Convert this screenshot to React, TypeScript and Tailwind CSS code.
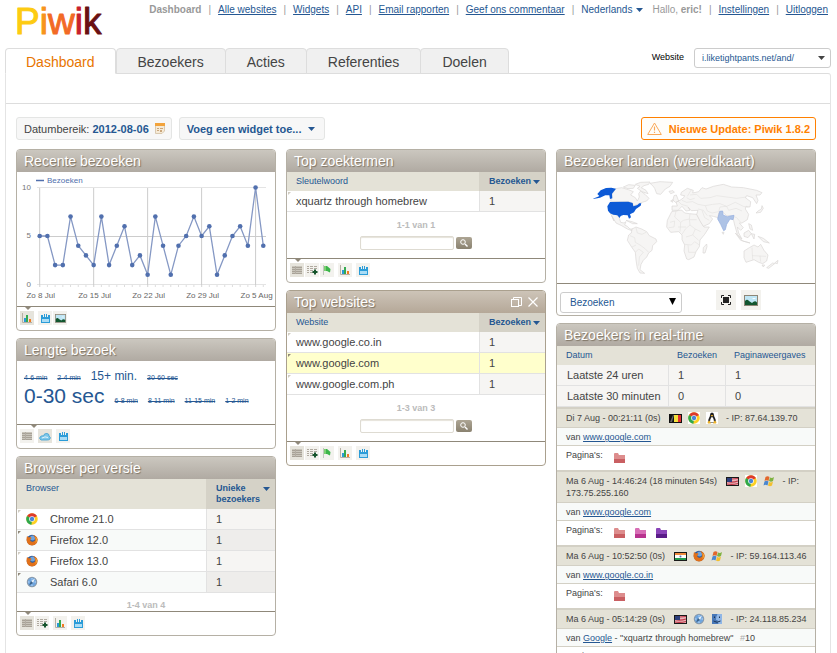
import React, { ReactNode } from "react";

/* ---------- small icons ---------- */

const Chrome = () => (
  <svg viewBox="0 0 24 24" className="inline-block h-3 w-3 shrink-0" aria-hidden="true">
    <rect width="24" height="24" fill="#fff" />
    <circle cx="12" cy="12" r="11.500" fill="#fdd023" />
    <path d="M12 12 L2 6.200 A11.500 11.500 0 0 1 22 6.200 Z" fill="#dd3a2c" />
    <path d="M12 12 L2 6.200 A11.500 11.500 0 0 0 11 23.500 Z" fill="#2fa84c" />
    <circle cx="12" cy="12" r="5.600" fill="#fff" />
    <circle cx="12" cy="12" r="4.400" fill="#4a86d8" />
  </svg>
);

const Firefox = () => (
  <svg viewBox="0 0 24 24" className="inline-block h-3 w-3 shrink-0" aria-hidden="true">
    <circle cx="12" cy="12" r="10.500" fill="#2b5a9c" />
    <circle cx="13" cy="8" r="5" fill="#6fa3dc" />
    <path d="M2 4 L6 7 Q9 5 11 8 L8 12 Q10 17 15 15 Q19 14 18 8 Q17 4 14 2 Q22 3 23.500 11 Q23 22 12 23 Q2 22 1 12 Q1 8 2 4Z" fill="#e0701a" />
    <path d="M19 5 Q24 12 19 18 Q21 12 19 5Z" fill="#fbc441" />
  </svg>
);

const Safari = () => (
  <svg viewBox="0 0 24 24" className="inline-block h-3 w-3 shrink-0" aria-hidden="true">
    <circle cx="12" cy="12" r="10.500" fill="#8c9aa8" />
    <circle cx="12" cy="12" r="8.500" fill="#6fa6df" />
    <path d="M18 5 L14 14 L10 10Z" fill="#e8f0f8" />
    <path d="M6 19 L14 14 L10 10Z" fill="#3d6288" />
    <path d="M12 4v3M12 17v3M4 12h3M17 12h3" stroke="#dbe9f7" strokeWidth="1.500" />
  </svg>
);

const Windows = () => (
  <svg viewBox="0 0 24 24" className="inline-block h-3 w-3 shrink-0" aria-hidden="true">
    <path d="M5 4 Q9 1 13 4 L11 12 Q7 9 3 12Z" fill="#e2672c" />
    <path d="M14 5 Q18 7 22 4 L20 12 Q16 15 12 12Z" fill="#7fb241" />
    <path d="M3 13 Q7 10 11 13 L9 21 Q5 18 1 21Z" fill="#4a87cf" />
    <path d="M12 14 Q16 16 20 13 L18 21 Q14 24 10 21Z" fill="#f3c02f" />
  </svg>
);

const Mac = () => (
  <svg viewBox="0 0 24 24" className="inline-block h-3 w-3 shrink-0" aria-hidden="true">
    <rect x="2" y="2" width="20" height="20" fill="#8fb6e6" />
    <path d="M2 2 H13 Q9 9 10 14 H13 Q13 19 15 22 H2Z" fill="#4878b8" />
    <path d="M7 7v3M17 7v3M5 16 Q12 21 19 16" stroke="#1d3557" strokeWidth="2" fill="none" />
  </svg>
);

const Tux = () => (
  <svg viewBox="0 0 24 24" className="inline-block h-3 w-3 shrink-0" aria-hidden="true">
    <rect width="24" height="24" fill="#fff" />
    <path d="M12 1 Q16 1 16 6 Q16 9 18 12 Q21 17 19 21 H5 Q3 17 6 12 Q8 9 8 6 Q8 1 12 1Z" fill="#222" />
    <path d="M12 9 Q16 13 16 20 H8 Q8 13 12 9Z" fill="#fff" />
    <path d="M9 6 H15 L12 9Z" fill="#f0b429" />
    <path d="M3 20 L7 17 L10 23 H4Z M21 20 L17 17 L14 23 H20Z" fill="#f0b429" />
  </svg>
);

const FlagBE = () => (
  <svg viewBox="0 0 13 9" className="inline-block h-[9px] w-[13px] shrink-0" aria-hidden="true">
    <rect width="13" height="9" fill="#111" />
    <rect x="5" y="1" width="4" height="7" fill="#f4e13c" />
    <rect x="9" y="1" width="3" height="7" fill="#e03131" />
    <path d="M1 8 L4 1 H5 L3 8Z" fill="#666" />
  </svg>
);

const FlagUS = () => (
  <svg viewBox="0 0 13 9" className="inline-block h-[9px] w-[13px] shrink-0" aria-hidden="true">
    <rect width="13" height="9" fill="#1a1a1a" />
    <rect x="1" y="1" width="11" height="7" fill="#e9b4b8" />
    <path d="M1 4.500 Q6 6 12 4 M1 7 Q6 8 12 6.500 M6 2 L12 1.500" stroke="#c0394a" strokeWidth="1.200" fill="none" />
    <rect x="1" y="1" width="5" height="4" fill="#2d3f7c" />
  </svg>
);

const FlagIN = () => (
  <svg viewBox="0 0 13 9" className="inline-block h-[9px] w-[13px] shrink-0" aria-hidden="true">
    <rect width="13" height="9" fill="#1a1a1a" />
    <rect x="1" y="1" width="11" height="3" fill="#f08a3c" />
    <rect x="1" y="3" width="11" height="3" fill="#fff" />
    <rect x="1" y="6" width="11" height="2" fill="#239a4b" />
    <circle cx="6.500" cy="4.500" r="1" fill="#5568b0" />
  </svg>
);

const Folder = ({ color, dark }: { color: string; dark: string }) => (
  <svg viewBox="0 0 11 10" className="h-[10px] w-[11px]" aria-hidden="true">
    <path d="M0 1 Q0 0 1 0 H4 L5 2 H11 V10 H0Z" fill={color} />
    <path d="M0 6 H11 V10 H0Z" fill={dark} />
  </svg>
);

const TableIcon = () => (
  <svg viewBox="0 0 10 8" className="h-2 w-[10px]" aria-hidden="true">
    <rect width="10" height="8" fill="#c9c5bb" />
    <path d="M0 1.500H10M0 3.500H10M0 5.500H10M0 7.500H10" stroke="#a8a297" />
    <path d="M3.500 0V8" stroke="#b3ada3" />
  </svg>
);

const TablePlusIcon = () => (
  <svg viewBox="0 0 12 10" className="h-[10px] w-3" aria-hidden="true">
    <path d="M1 1h2v1H1zM4 1h3v1H4zM8 1h3v1H8zM1 3h2v1H1zM4 3h3v1H4zM8 3h3v1H8zM1 5h2v1H1zM4 5h3v1H4zM1 7h2v1H1zM4 7h3v1H4z" fill="#b0aaa0" />
    <path d="M9 4.500V9.500M6.500 7H11.500" stroke="#15542c" strokeWidth="2" />
  </svg>
);

const ChartIcon = () => (
  <svg viewBox="0 0 10 10" className="h-[10px] w-[10px]" aria-hidden="true">
    <path d="M.5 0V9.500H10" stroke="#b5b0a5" fill="none" />
    <rect x="2" y="5" width="2" height="4" fill="#2c9ad6" />
    <rect x="4" y="2" width="2" height="7" fill="#35aa50" />
    <rect x="7" y="6" width="2" height="3" fill="#f27b21" />
  </svg>
);

const SaveIcon = () => (
  <svg viewBox="0 0 9 9" className="h-[9px] w-[9px]" aria-hidden="true">
    <path d="M0 1H2V3H3V0H4V3H5V0H6V3H7V1H9V9H0Z" fill="#2b9cd8" />
    <rect x="1" y="5" width="7" height="3" fill="#a9dcf5" />
  </svg>
);

const PictureIcon = ({ big }: { big?: boolean }) => (
  <svg viewBox="0 0 14 11" className={big ? "h-[11px] w-[14px]" : "h-[9px] w-[11px]"} aria-hidden="true">
    <rect x=".5" y=".5" width="13" height="10" fill="#bfe6f5" stroke="#8d8677" />
    <path d="M1 6 Q3 3.500 5 6 L8 8 Q11 5 13 7.500 V10 H1Z" fill="#12562f" />
    <path d="M8 4 q2 -2 4 0z" fill="#fff" />
  </svg>
);

const FlagIcon = () => (
  <svg viewBox="0 0 10 10" className="h-[10px] w-[10px]" aria-hidden="true">
    <path d="M1.500 0V10" stroke="#c2c6bf" />
    <path d="M2 1 L5 1 L8.500 4 L8 7.500 L5 6 L2 6Z" fill="#3cb54a" />
    <path d="M2 1 L4 1 L4 6 L2 6Z" fill="#7ccf72" />
  </svg>
);

const CloudIcon = () => (
  <svg viewBox="0 0 12 9" className="h-[9px] w-3" aria-hidden="true">
    <path d="M2 8 Q0 7 1 5 Q3 3 4.500 4 Q5 1 8 1.500 Q10.500 2 10 4 Q12 5 11 7 Q10 8 8 8Z" fill="#7cc7ea" stroke="#3d9fd0" strokeWidth=".8" />
    <path d="M3 6 Q6 4 9 5.500" stroke="#e2f4fc" fill="none" />
  </svg>
);

const Caret = () => (
  <svg viewBox="0 0 7 4" className="inline-block h-1 w-[7px] shrink-0" aria-hidden="true">
    <path d="M0 0H7L3.500 4Z" fill="currentColor" />
  </svg>
);

/* ---------- widget building blocks ---------- */

function Widget({ title, hover, children }: { title: string; hover?: boolean; children: ReactNode }) {
  return (
    <section className={`overflow-hidden rounded-[4px] border bg-white ${hover ? "border-[#aaa08e]" : "border-[#b5b0a5]"}`}>
      <header
        className={`flex h-[22px] items-center justify-between bg-linear-to-b px-[7px] ${
          hover ? "from-[#cdc4b8] to-[#b5a898]" : "from-[#cbc7bf] to-[#b0aaa2]"
        }`}
      >
        <h2 className="text-[14px] leading-5 text-white [text-shadow:1px_1px_1px_#7e7363]">{title}</h2>
        {hover && (
          <span className="flex items-center gap-[6px] text-white">
            <button type="button" aria-label="Maximaliseren">
              <svg viewBox="0 0 11 10" className="h-[10px] w-[11px]" fill="none" stroke="currentColor">
                <path d="M2.500 2V.5H10.500V8.500H8" />
                <rect x=".5" y="2.500" width="7" height="7" />
              </svg>
            </button>
            <button type="button" aria-label="Sluiten">
              <svg viewBox="0 0 10 10" className="h-[10px] w-[10px]" fill="none" stroke="currentColor">
                <path d="M.5 .5L9.500 9.500M9.500 .5L.5 9.500" strokeWidth="1.200" />
              </svg>
            </button>
          </span>
        )}
      </header>
      {children}
    </section>
  );
}

type Tool = { label: string; icon: ReactNode; active?: boolean };

const T = {
  table: { label: "Tabel", icon: <TableIcon /> },
  tablePlus: { label: "Uitgebreide tabel", icon: <TablePlusIcon /> },
  goals: { label: "Doelen", icon: <FlagIcon /> },
  chart: { label: "Grafiek", icon: <ChartIcon /> },
  save: { label: "Exporteren", icon: <SaveIcon /> },
  picture: { label: "Afbeelding", icon: <PictureIcon /> },
  cloud: { label: "Tag cloud", icon: <CloudIcon /> },
};

function Footer({ groups, marker = "left-2" }: { groups: Tool[][]; marker?: string }) {
  return (
    <footer className="relative flex h-6 gap-1 border-t border-[#8f887a] px-[3px] pt-1">
      <svg viewBox="0 0 6 3" className={`absolute top-0 h-[3px] w-[6px] ${marker}`} aria-hidden="true">
        <path d="M0 0H6L3 3Z" fill="#8f887a" />
      </svg>
      {groups.map((g, i) => (
        <div key={i} className="flex gap-px">
          {g.map((t) => (
            <button
              key={t.label}
              type="button"
              aria-label={t.label}
              className={`flex h-[14px] w-[14px] items-center justify-center ${t.active ? "bg-[#e6e4dc]" : "bg-[#f3f2ee]"}`}
            >
              {t.icon}
            </button>
          ))}
        </div>
      ))}
    </footer>
  );
}

type Row = { label: string; value: string; icon?: ReactNode; hover?: boolean };

function DataTable({ name, metric, rows, wide }: { name: string; metric: string; rows: Row[]; wide?: boolean }) {
  return (
    <table className="w-full table-fixed border-separate border-spacing-0 text-left">
      <thead>
        <tr className={`text-[9px] leading-[11px] text-[#255792] ${wide ? "h-[30px] align-top" : "h-[19px]"}`}>
          <th className={`bg-[#e4e2d7] pl-[9px] font-normal ${wide ? "pt-1" : ""}`}>{name}</th>
          <th className={`bg-[#d5d2c7] pr-[5px] pl-[10px] font-bold ${wide ? "w-[69px] pt-1" : "w-[66px]"}`}>
            <span className="flex items-start justify-between">
              {metric}
              <span className="flex h-[11px] items-center">
                <Caret />
              </span>
            </span>
          </th>
        </tr>
      </thead>
      <tbody>
        {rows.map((r, i) => {
          const even = i % 2 === 1;
          return (
            <tr key={r.label} className="h-[21px] text-[11px] leading-4 text-[#444]">
              <td className={`relative border-b border-[#e2e2e2] pl-[9px] ${r.hover ? "bg-[#ffffcc]" : even ? "bg-[#f8faf9]" : "bg-white"}`}>
                <svg viewBox="0 0 3 3" className="absolute top-px left-px h-[3px] w-[3px]" aria-hidden="true">
                  <path d="M0 0H3L0 3Z" fill={even ? "#8f887a" : "#d0ccc2"} />
                </svg>
                <span className={r.icon ? "flex items-center gap-3" : ""}>
                  {r.icon}
                  {r.label}
                </span>
              </td>
              <td
                className={`border-b border-l border-[#e2e2e2] pl-[9px] ${
                  r.hover ? "bg-[#ffffcc]" : even ? "bg-[#eeedeb]" : "bg-[#f6f5f3]"
                }`}
              >
                {r.value}
              </td>
            </tr>
          );
        })}
      </tbody>
    </table>
  );
}

function Search({ id }: { id: string }) {
  return (
    <form className="flex items-center justify-center gap-[2px] pb-2" onSubmit={(e) => e.preventDefault()}>
      <label htmlFor={id} className="sr-only">
        Zoeken
      </label>
      <input id={id} type="text" className="h-[14px] w-[94px] rounded-[2px] border border-[#dedbd2] bg-white px-1 text-[9px] shadow-[inset_0_1px_1px_#e6e3da]" />
      <button type="submit" aria-label="Zoeken" className="flex h-3 w-4 items-center justify-center rounded-[2px] bg-linear-to-b from-[#ada594] to-[#8a8270]">
        <svg viewBox="0 0 8 8" className="h-2 w-2" fill="none" stroke="#fff">
          <circle cx="3" cy="3" r="2.300" />
          <path d="M5 5L7.500 7.500" strokeWidth="1.400" />
        </svg>
      </button>
    </form>
  );
}

const Pager = ({ text, className }: { text: string; className: string }) => (
  <p className={`text-center text-[9px] leading-3 font-bold text-[#bbb] ${className}`}>{text}</p>
);

/* ---------- line chart ---------- */

const visits = [5, 5, 2, 2, 7, 4, 3, 2, 7, 2, 4, 6, 2, 3, 1, 7, 4, 1, 4, 5, 7, 5, 6, 1, 3, 5, 6, 4, 10, 4];
const px = (i: number) => 22.700 + i * 7.710;
const py = (v: number) => 112.500 - v * 9.700;
const weeks: [number, string][] = [
  [0, "Zo 8 Jul"],
  [7, "Zo 15 Jul"],
  [14, "Zo 22 Jul"],
  [21, "Zo 29 Jul"],
  [28, "Zo 5 Aug"],
];

function VisitsChart() {
  return (
    <svg viewBox="0 0 258 134" className="block w-full font-['Liberation_Sans',sans-serif]" role="img" aria-label="Bezoeken">
      <path d="M20 15.500H249M20 112.500H249" stroke="#e4e4e4" />
      <path d="M20 64.500H249" stroke="#ccc" />
      {weeks.map(([i, label]) => (
        <g key={label}>
          <path d={`M${px(i)} 16V115`} stroke="#ccc" />
          <text x={px(i) + 1} y="126" fontSize="8" fill="#666" textAnchor="middle">
            {label}
          </text>
        </g>
      ))}
      {visits.map((_, i) => (
        <path key={i} d={`M${px(i)} 113v2`} stroke="#ddd" />
      ))}
      <g fontSize="8" fill="#777" textAnchor="end">
        <text x="14" y="18">10</text>
        <text x="14" y="66">5</text>
        <text x="14" y="115">0</text>
      </g>
      <path d="M19 8.500H27" stroke="#5170ae" strokeWidth="1.500" />
      <text x="30" y="11" fontSize="8" fill="#5170ae">
        Bezoeken
      </text>
      <polyline points={visits.map((v, i) => `${px(i)},${py(v)}`).join(" ")} fill="none" stroke="#8598c4" strokeWidth="1.300" />
      {visits.map((v, i) => (
        <circle key={i} cx={px(i)} cy={py(v)} r="2.300" fill="#5170ae" />
      ))}
    </svg>
  );
}

/* ---------- world map ---------- */

function WorldMap() {
  return (
    <svg viewBox="21 81 774 333" className="block w-full" role="img" aria-label="Wereldkaart">
      <g fill="#f6f5f4" stroke="#d9d6d4" strokeWidth="2" strokeLinejoin="round">
        <path d="M197 131L215 128L235 134L250 140L242 150L256 158L262 168L268 156L266 146L272 138L285 148L297 160L290 168L276 172L262 178L250 183L248 174L235 170L182 169L186 148Z" />
        <path d="M220 126L236 119L256 121L250 130L234 131ZM256 118L272 112L300 111L296 118L282 122L274 128L288 136L294 146L276 140L262 130L270 124Z" />
        <path d="M300 115L330 110L368 112L360 124L346 132L332 148L320 146L314 130L308 122Z" />
        <path d="M357 139L369 137L373 142L362 146Z" />
        <path d="M182 206L202 210L208 220L212 232L222 234L228 230L224 240L232 244L240 252L250 252L246 257L232 252L215 242L198 234L190 220L186 214L192 228Z" />
        <path d="M228 226L246 230L262 236L248 236Z" />
        <path d="M246 252L258 246L275 252L290 260L298 272L318 282L320 290L308 302L306 316L296 324L290 336L280 346L273 358L270 374L284 385L270 384L262 370L258 345L256 322L246 308L232 286L236 270L244 264Z" />
        <path d="M365 200L395 195L404 204L418 206L440 208L450 226L462 246L478 246L464 268L450 285L448 305L438 320L432 336L416 344L410 342L402 318L404 300L396 284L396 270L386 260L362 262L350 246L352 226Z" />
        <path d="M460 308L470 297L471 305L465 324L459 324Z" />
        <path d="M366 196L366 183L382 183L378 171L390 166L401 158L404 152L392 150L394 142L412 130L430 136L428 144L446 140L456 128L468 132L490 124L520 118L545 126L580 128L620 136L636 143L630 150L618 150L624 166L620 176L608 158L590 152L586 158L602 170L600 186L588 184L586 192L596 208L592 224L576 234L568 234L580 248L572 256L562 246L566 264L576 282L562 268L554 240L548 214L530 212L516 200L506 204L504 218L490 214L478 212L488 222L478 236L460 244L450 228L440 208L444 196L424 197L414 186L420 196L408 198L396 184L384 196Z" />
        <path d="M369 165L372 152L379 150L386 168L376 172ZM362 168L368 164L368 172Z" />
        <path d="M618 204L624 198L634 192L636 182L640 190L632 202ZM596 236L604 240L608 256L600 252ZM582 264L596 256L604 266L594 278L582 274ZM556 264L578 288L600 294L572 286ZM604 266L614 268L612 282ZM624 274L640 280L658 294L640 290ZM516 262L522 262L520 268Z" />
        <path d="M582 318L598 308L612 300L624 306L632 298L642 316L654 330L650 348L638 356L626 352L612 344L588 352L582 338ZM636 360L644 360L640 366Z" />
        <path d="M650 368L668 354L674 356L656 370ZM674 354L684 346L682 356Z" />
      </g>
      <g fill="none" stroke="#dfdcda" strokeWidth="1.500">
        <path d="M258 248L262 264L276 268L288 262M240 272L254 278L256 292L270 300L284 310L296 322M256 322L266 312L280 322L268 336L266 362M246 306L258 300" />
        <path d="M378 198L374 216L392 232L400 226L418 222L420 206M360 232L374 228L372 246L356 248M392 232L390 260M418 222L420 240L406 252L396 268M440 224L420 224M420 240L436 252L452 260M436 252L428 270L408 276M428 270L446 286M404 298L424 300L434 290L448 300M414 300L416 322L436 322M384 246L408 246" />
        <path d="M384 168L394 178L414 184M396 166L410 172L428 170L444 178L466 182L488 178L510 176L530 184L556 172L580 184L596 188M410 158L420 164L434 160M412 154L424 134M466 182L472 198L486 204L506 200L510 186L530 184L536 196L558 190L576 198M444 192L460 196L472 212M456 196L464 218L478 226M548 214L560 218L572 232M420 150L440 148L452 160L480 158L500 152L560 160L590 156" />
        <path d="M606 308L608 344M606 332L648 334M630 332L632 350" />
      </g>
      <g fill="#0d5ad6">
        <path d="M180 171L235 170L248 174L250 184L262 180L268 175L274 175L272 182L258 192L252 202L240 208L243 217L237 221L233 211L220 210L212 213L209 219L202 211L190 209L180 205L174 197L172 184Z" />
        <path d="M128 161L142 156L148 153L142 147L152 136L168 129L184 128L198 131L186 146L187 160L180 162L178 151L166 151L150 158L134 161Z" />
      </g>
      <path d="M509 199L518 198L519 210L532 215L540 213L552 211L549 224L540 222L530 238L526 254L521 257L512 238L503 222Z" fill="#aec3e6" stroke="#92ace0" strokeWidth="2" />
    </svg>
  );
}

/* ---------- real-time visits ---------- */

const red = <Folder color="#dd8d8d" dark="#c95f62" />;
const magenta = <Folder color="#d86fb6" dark="#b8338f" />;
const violet = <Folder color="#8a44b8" dark="#5a1c88" />;

const log = [
  { when: "Di 7 Aug - 00:21:11 (0s)", ip: "87.64.139.70", icons: [<FlagBE />, <Chrome />, <Tux />], link: "www.google.com", pages: [red] },
  { when: "Ma 6 Aug - 14:46:24 (18 minuten 54s)", ip: "173.75.255.160", icons: [<FlagUS />, <Chrome />, <Windows />], link: "www.google.com", pages: [red, magenta, violet] },
  { when: "Ma 6 Aug - 10:52:50 (0s)", ip: "59.164.113.46", icons: [<FlagIN />, <Firefox />, <Windows />], link: "www.google.co.in", pages: [red] },
  { when: "Ma 6 Aug - 05:14:29 (0s)", ip: "24.118.85.234", icons: [<FlagUS />, <Safari />, <Mac />], link: "Google", term: "xquartz through homebrew", rank: "10", pages: [red] },
];

function Visit({ v }: { v: (typeof log)[number] }) {
  return (
    <li className="border-t-2 border-[#d3d0c5] text-[9px] leading-3 text-[#444]">
      <div className="border-b border-[#d3d0c5] bg-[#e4e2d7] py-[3px] pr-[3px] pl-[9px]">
        {v.when}
        <span className="mr-[5px] ml-[9px] inline-flex h-3 items-center gap-[6px] align-top">
          {v.icons.map((ic, i) => (
            <React.Fragment key={i}>{ic}</React.Fragment>
          ))}
        </span>{" "}
        - IP: {v.ip}
      </div>
      <div className="h-[18px] border-b border-[#d3d0c5] bg-[#f8faf9] pt-[3px] pl-[9px]">
        van{" "}
        <a href="#ref" className="text-[#255792] underline">
          {v.link}
        </a>
        {v.term && (
          <>
            {" "}- "{v.term}" <span className="ml-1 text-[#aaa]">#</span>
            {v.rank}
          </>
        )}
      </div>
      <div className="flex h-6 items-start pt-[3px] pl-[9px]">
        <span className="w-12">Pagina's:</span>
        <span className="flex gap-[10px] pt-1">
          {v.pages.map((p, i) => (
            <a key={i} href="#page" aria-label={`Pagina ${i + 1}`}>
              {p}
            </a>
          ))}
        </span>
      </div>
    </li>
  );
}

function Realtime() {
  const rows = [
    ["Laatste 24 uren", "1", "1"],
    ["Laatste 30 minuten", "0", "0"],
  ];
  return (
    <>
      <table className="w-full table-fixed border-separate border-spacing-0 text-left">
        <thead>
          <tr className="h-[19px] bg-[#e4e2d7] text-[9px] leading-[11px] text-[#255792]">
            <th className="pl-[9px] font-normal">Datum</th>
            <th className="w-[57px] pl-[9px] font-normal">Bezoeken</th>
            <th className="w-[90px] pl-[9px] font-normal">Paginaweergaves</th>
          </tr>
        </thead>
        <tbody>
          {rows.map((r) => (
            <tr key={r[0]} className="h-[21px] bg-[#f6f5f3] text-[11px] leading-4 text-[#444]">
              {r.map((c, i) => (
                <td key={i} className={`border-b border-[#e2e2e2] ${i ? "border-l pl-[9px]" : "pl-[10px]"}`}>
                  {c}
                </td>
              ))}
            </tr>
          ))}
        </tbody>
      </table>
      <ul>
        {log.map((v) => (
          <Visit key={v.when} v={v} />
        ))}
      </ul>
    </>
  );
}

/* ---------- page ---------- */

const tags: [string, string][][] = [
  [
    ["4-6 min", "text-[7px] line-through"],
    ["2-4 min", "text-[7px] line-through"],
    ["15+ min.", "text-[12px]"],
    ["30-60 sec", "text-[7px] line-through"],
  ],
  [
    ["0-30 sec", "text-[21px]"],
    ["6-8 min", "text-[7px] line-through"],
    ["8-11 min", "text-[7px] line-through"],
    ["11-15 min", "text-[7px] line-through"],
    ["1-2 min", "text-[7px] line-through"],
  ],
];

const links = ["Alle websites", "Widgets", "API", "Email rapporten", "Geef ons commentaar"];
const tabs = ["Dashboard", "Bezoekers", "Acties", "Referenties", "Doelen"];

export default function App() {
  const bar = <span className="text-[#999]">|</span>;
  return (
    <div className="h-screen overflow-hidden bg-white pr-[6px] pl-[5px] font-['Liberation_Sans',Arial,sans-serif] text-[#444]">
      <header className="flex h-12 items-start justify-between pr-[3px] pl-2">
        <svg viewBox="0 0 96 48" className="h-12 w-24 shrink-0 font-['Liberation_Sans',sans-serif]" role="img" aria-label="Piwik">
          <text x="2" y="34" fontSize="37" strokeWidth="1" strokeLinejoin="round">
            <tspan fill="#fdcb12" stroke="#fdcb12">P</tspan>
            <tspan fill="#f7941d" stroke="#f7941d">i</tspan>
            <tspan fill="#f26a25" stroke="#f26a25">w</tspan>
            <tspan fill="#c9202e" stroke="#c9202e">i</tspan>
            <tspan fill="#6a1012" stroke="#6a1012">k</tspan>
          </text>
        </svg>
        <nav className="flex items-center gap-[7px] pt-1 text-[10px] leading-3 whitespace-nowrap text-[#999]">
          <span className="font-bold">Dashboard</span>
          {links.map((l) => (
            <React.Fragment key={l}>
              {bar}
              <a href="#nav" className="text-[#255792] underline">
                {l}
              </a>
            </React.Fragment>
          ))}
          {bar}
          <button type="button" className="mr-[2px] flex items-center gap-1 text-[#255792]">
            Nederlands <Caret />
          </button>
          <span>
            Hallo, <strong>eric!</strong>
          </span>
          {bar}
          <a href="#settings" className="text-[#255792] underline">Instellingen</a>
          {bar}
          <a href="#logout" className="text-[#255792] underline">Uitloggen</a>
        </nav>
      </header>

      <div className="flex items-start justify-between">
        <nav className="-mb-px flex">
          {tabs.map((t, i) => (
            <a
              key={t}
              href="#tab"
              className={`relative h-[26px] rounded-t-[4px] border border-[#ddd] text-[14px] leading-[26px] ${
                i === 0 ? "border-b-white bg-white px-5 text-[#e87500]" : "-ml-px bg-[#f0f0f0] px-[21px] text-[#444]"
              } ${i === 1 ? "ml-0" : ""}`}
            >
              {t}
            </a>
          ))}
        </nav>
        <div className="flex items-center gap-[10px]">
          <label htmlFor="site" className="text-[9px] text-black">Website</label>
          <span className="relative">
            <select id="site" className="block h-5 w-[137px] appearance-none rounded-[3px] border border-[#ccc] bg-white pt-px pl-[7px] text-[9px] text-[#255792]">
              <option>i.liketightpants.net/and/</option>
            </select>
            <span className="pointer-events-none absolute top-2 right-[6px] flex text-[#444]">
              <Caret />
            </span>
          </span>
        </div>
      </div>

      <main className="rounded-tr-[3px] border border-b-0 border-[#e4e4e4] border-t-[#ddd]">
        <div className="h-[30px] border-b border-[#ddd]" />
        <div className="pt-[13px] pr-[14px] pl-[10px]">
          <div className="flex items-center gap-[7px] text-[11px] leading-4">
            <button type="button" className="flex h-[23px] items-center rounded-[3px] border border-[#e4e5e4] bg-[#f7f7f7] pr-[6px] pl-[7px]">
              Datumbereik:&nbsp;<strong className="text-[#255792]">2012-08-06</strong>
              <svg viewBox="0 0 10 11" className="ml-[6px] h-[11px] w-[10px]" aria-hidden="true">
                <path d="M.5 .5H9.500V8L7 10.500H.5Z" fill="#f6ead6" stroke="#d9c9b0" />
                <rect width="10" height="3" fill="#f2a33c" />
                <path d="M2 5h2v1H2zM5 5h3v1H5zM2 7h2v1H2zM5 7h2v2H5z" fill="#c9a67c" />
              </svg>
            </button>
            <button type="button" className="flex h-[23px] items-center gap-[7px] rounded-[3px] border border-[#e4e5e4] bg-[#f7f7f7] pr-[9px] pl-[7px] font-bold text-[#255792]">
              Voeg een widget toe... <Caret />
            </button>
            <a href="#update" className="ml-auto flex h-[23px] items-center gap-[7px] rounded-[3px] border border-[#ff8000] bg-[#fffdf9] px-[5px] font-bold text-[#ff8000]">
              <svg viewBox="0 0 15 13" className="h-[13px] w-[15px]" fill="none" stroke="#f9a95a" aria-hidden="true">
                <path d="M7.500 1L14.300 12.500H.7Z" strokeLinejoin="round" />
                <path d="M7.500 4.500V8.500M7.500 9.700V11" strokeWidth="1.200" />
              </svg>
              Nieuwe Update: Piwik 1.8.2
            </a>
          </div>

          <div className="grid grid-cols-3 items-start gap-[10px] pt-[9px]">
            <div className="flex flex-col gap-[7px]">
              <Widget title="Recente bezoeken">
                <VisitsChart />
                <Footer groups={[[{ ...T.chart, active: true }], [T.save, T.picture]]} />
              </Widget>
              <Widget title="Lengte bezoek">
                <div className="h-[63px] px-[7px] pt-[7px] text-[#255792]">
                  {tags.map((line, i) => (
                    <div key={i} className={`flex items-baseline gap-[10px] whitespace-nowrap ${i ? "leading-5" : "leading-4"}`}>
                      {line.map(([t, c]) => (
                        <span key={t} className={c}>{t}</span>
                      ))}
                    </div>
                  ))}
                </div>
                <Footer marker="left-[14px]" groups={[[T.table], [{ ...T.cloud, active: true }], [T.save]]} />
              </Widget>
              <Widget title="Browser per versie">
                <DataTable
                  wide
                  name="Browser"
                  metric="Unieke bezoekers"
                  rows={[
                    { label: "Chrome 21.0", value: "1", icon: <Chrome /> },
                    { label: "Firefox 12.0", value: "1", icon: <Firefox /> },
                    { label: "Firefox 13.0", value: "1", icon: <Firefox /> },
                    { label: "Safari 6.0", value: "1", icon: <Safari /> },
                  ]}
                />
                <Pager text="1-4 van 4" className="pt-[6px]" />
                <Footer groups={[[{ ...T.table, active: true }, T.tablePlus], [T.chart], [T.save]]} />
              </Widget>
            </div>

            <div className="flex flex-col gap-[7px]">
              <Widget title="Top zoektermen">
                <DataTable name="Sleutelwoord" metric="Bezoeken" rows={[{ label: "xquartz through homebrew", value: "1" }]} />
                <Pager text="1-1 van 1" className="pt-[7px] pb-[5px]" />
                <Search id="search-terms" />
                <Footer groups={[[{ ...T.table, active: true }, T.tablePlus, T.goals], [T.chart], [T.save]]} />
              </Widget>
              <Widget title="Top websites" hover>
                <DataTable
                  name="Website"
                  metric="Bezoeken"
                  rows={[
                    { label: "www.google.co.in", value: "1" },
                    { label: "www.google.com", value: "1", hover: true },
                    { label: "www.google.com.ph", value: "1" },
                  ]}
                />
                <Pager text="1-3 van 3" className="pt-[7px] pb-[5px]" />
                <Search id="search-sites" />
                <Footer groups={[[{ ...T.table, active: true }, T.tablePlus, T.goals], [T.chart], [T.save]]} />
              </Widget>
            </div>

            <div className="flex flex-col gap-[7px]">
              <Widget title="Bezoeker landen (wereldkaart)">
                <WorldMap />
                <footer className="flex h-8 items-start border-t border-[#8f887a] pt-[6px] pl-[3px]">
                  <label htmlFor="metric" className="sr-only">Statistiek</label>
                  <span className="relative mt-[2px]">
                    <select id="metric" className="block h-[21px] w-[122px] appearance-none rounded-[3px] border border-[#ccc] bg-white pl-[9px] text-[10px] text-[#255792]">
                      <option>Bezoeken</option>
                    </select>
                    <svg viewBox="0 0 7 7" className="pointer-events-none absolute top-[6px] right-[6px] h-[7px] w-[7px]" aria-hidden="true">
                      <path d="M0 0H7L3.500 7Z" fill="#000" />
                    </svg>
                  </span>
                  <button type="button" aria-label="Volledig scherm" className="ml-[34px] flex h-5 w-5 items-center justify-center bg-[#f3f2ee]">
                    <svg viewBox="0 0 10 10" className="h-[10px] w-[10px]" fill="none" stroke="#222">
                      <path d="M.5 3V.5H3M7 .5H9.500V3M9.500 7V9.500H7M3 9.500H.5V7" />
                      <rect x="2.500" y="2.500" width="5" height="5" fill="#222" />
                    </svg>
                  </button>
                  <button type="button" aria-label="Afbeelding" className="ml-[5px] flex h-5 w-5 items-center justify-center bg-[#f3f2ee]">
                    <PictureIcon big />
                  </button>
                </footer>
              </Widget>
              <Widget title="Bezoekers in real-time">
                <Realtime />
              </Widget>
            </div>
          </div>
        </div>
      </main>
    </div>
  );
}
